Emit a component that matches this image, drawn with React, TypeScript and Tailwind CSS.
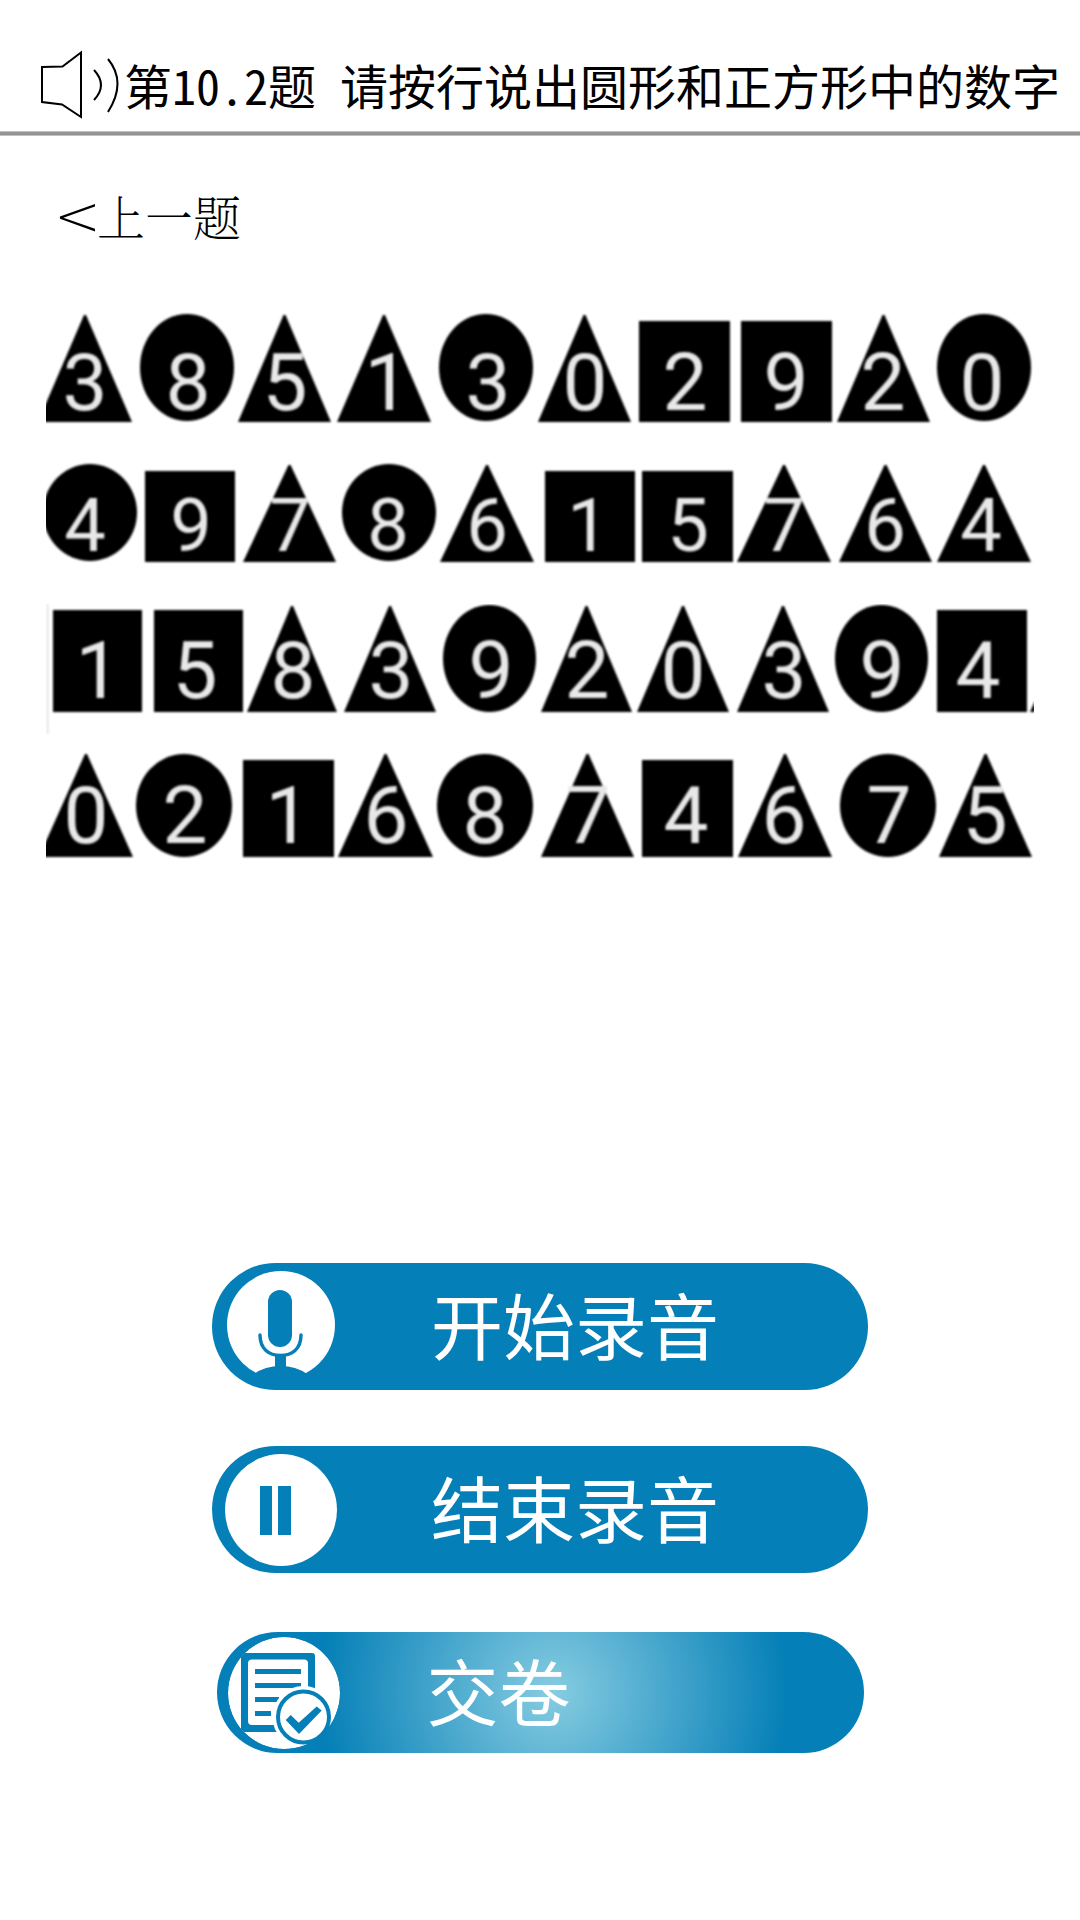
import type { ReactNode } from 'react';

type Kind = 'tri' | 'circle' | 'square';

// One figure: its kind, left and right edge, the digit and the digit's centre.
type Figure = [Kind, number, number, string, number];

interface RowData {
  tri: [number, number];
  circle: [number, number];
  square: [number, number];
  baseline: number;
  size: number;
  figures: Figure[];
}

const rows: RowData[] = [
  {
    tri: [7, 114],
    circle: [6, 113],
    square: [13, 114],
    baseline: 102,
    size: 80,
    figures: [
      ['tri', 38, 132, '3', 85],
      ['circle', 140, 234, '8', 188],
      ['tri', 238, 331, '5', 285],
      ['tri', 337, 431, '1', 387],
      ['circle', 439, 533, '3', 488],
      ['tri', 538, 631, '0', 585],
      ['square', 639, 730, '2', 685],
      ['square', 741, 832, '9', 786],
      ['tri', 837, 930, '2', 883],
      ['circle', 937, 1031, '0', 982],
    ],
  },
  {
    tri: [9, 106],
    circle: [8, 105],
    square: [15, 106],
    baseline: 95,
    size: 74,
    figures: [
      ['circle', 43, 137, '4', 85],
      ['square', 145, 235, '9', 191],
      ['tri', 243, 336, '7', 290],
      ['circle', 342, 436, '8', 388],
      ['tri', 440, 534, '6', 487],
      ['square', 545, 635, '1', 588],
      ['square', 642, 733, '5', 688],
      ['tri', 737, 831, '7', 784],
      ['tri', 839, 932, '6', 885],
      ['tri', 937, 1031, '4', 981],
    ],
  },
  {
    tri: [2, 108],
    circle: [1, 108],
    square: [6, 108],
    baseline: 94,
    size: 80,
    figures: [
      ['square', 53, 142, '1', 98],
      ['square', 154, 243, '5', 195],
      ['tri', 247, 337, '8', 293],
      ['tri', 344, 436, '3', 391],
      ['circle', 443, 536, '9', 491],
      ['tri', 541, 632, '2', 587],
      ['tri', 637, 729, '0', 683],
      ['tri', 737, 829, '3', 784],
      ['circle', 835, 928, '9', 882],
      ['square', 937, 1027, '4', 978],
    ],
  },
  {
    tri: [2, 105],
    circle: [2, 105],
    square: [8, 105],
    baseline: 91,
    size: 80,
    figures: [
      ['tri', 39, 133, '0', 86],
      ['circle', 136, 232, '2', 185],
      ['square', 243, 334, '1', 288],
      ['tri', 338, 433, '6', 386],
      ['circle', 437, 533, '8', 485],
      ['tri', 541, 634, '7', 588],
      ['square', 642, 733, '4', 686],
      ['tri', 738, 832, '6', 784],
      ['circle', 840, 936, '7', 889],
      ['tri', 939, 1032, '5', 985],
    ],
  },
];

function Shape({ kind, l, r, t, b }: { kind: Kind; l: number; r: number; t: number; b: number }) {
  const cx = (l + r) / 2;
  if (kind === 'circle') {
    return <ellipse cx={cx} cy={(t + b) / 2} rx={(r - l) / 2} ry={(b - t) / 2} />;
  }
  if (kind === 'square') {
    return <rect x={l} y={t} width={r - l} height={b - t} />;
  }
  return <path d={`M${cx - 1} ${t}h2L${r} ${b}H${l}Z`} />;
}

function FigureRow({ row, children }: { row: RowData; children?: ReactNode }) {
  return (
    <svg viewBox="46 0 988 148" className="block w-full">
      <g className="blur-[1px]">
        {children}
        {row.figures.map(([kind, l, r, digit, x]) => (
          <g key={l}>
            <Shape kind={kind} l={l} r={r} t={row[kind][0]} b={row[kind][1]} />
            <text
              x={x}
              y={row.baseline}
              fontSize={row.size}
              textAnchor="middle"
              className="fill-[#e8e8e8] font-['Roboto',sans-serif]"
            >
              {digit}
            </text>
          </g>
        ))}
      </g>
    </svg>
  );
}

function SpeakerIcon() {
  return (
    <svg viewBox="36 48 88 72" className="h-[72px] w-[88px] shrink-0 fill-none stroke-black" strokeWidth="2">
      <path d="M42 67L62.500 66.500L81 52.500V117L62 104.500L42 102Z" />
      <path d="M94 70Q108 85 94 100" />
      <path d="M108 59Q127 82 108 112" />
    </svg>
  );
}

function MicIcon() {
  return (
    <svg viewBox="226 1271 112 112" className="size-[112px] shrink-0 fill-[#047fb7]">
      <circle cx="282" cy="1325" r="54" fill="#fff" />
      <rect x="269" y="1290" width="24" height="57" rx="12" />
      <path d="M261 1335C261 1349 270 1355.500 281.500 1355.500S302 1349 302 1335" fill="none" stroke="#047fb7" strokeWidth="3.400" strokeLinecap="round" />
      <rect x="276" y="1355" width="11" height="13" />
      <path d="M255 1374Q266 1366 281.500 1366T308 1374V1381H255Z" />
    </svg>
  );
}

function PauseIcon() {
  return (
    <svg viewBox="226 1453 112 112" className="size-[112px] shrink-0 fill-[#047fb7]">
      <circle cx="282" cy="1509" r="56" fill="#fff" />
      <rect x="261" y="1485" width="12" height="49" />
      <rect x="279" y="1485" width="13" height="49" />
    </svg>
  );
}

function PaperIcon() {
  return (
    <svg viewBox="228 1637 112 112" className="size-[112px] shrink-0 fill-[#047fb7]">
      <clipPath id="paper-disc">
        <circle cx="284" cy="1693" r="56" />
      </clipPath>
      <g clipPath="url(#paper-disc)">
        <circle cx="284" cy="1693" r="56" fill="#fff" />
        <rect x="241" y="1653" width="74" height="79" rx="3" />
        <rect x="248" y="1659.500" width="60" height="65.500" rx="4" fill="#fff" />
        <path d="M255 1669h46v5h-46ZM255 1683h46v5h-46ZM255 1697h24v5h-24ZM255 1711h16v5h-16Z" />
        <circle cx="303.500" cy="1717" r="31" fill="#fff" />
      </g>
      <circle cx="303.500" cy="1717" r="25.500" fill="#fff" stroke="#047fb7" strokeWidth="4" />
      <path d="M285.700 1720L290.700 1715L298.700 1722.700L316.700 1706.500L321.700 1710.500L299 1734Z" />
    </svg>
  );
}

function PillButton({ icon, label, className }: { icon: ReactNode; label: string; className: string }) {
  return (
    <button
      type="button"
      className={`flex max-w-full items-center rounded-full text-7xl leading-none text-white ${className}`}
    >
      {icon}
      <span className="pb-2">{label}</span>
    </button>
  );
}

export default function App() {
  return (
    <div className="min-h-screen bg-white font-['Noto_Sans_CJK_SC',sans-serif] text-black">
      <header>
        <div className="flex items-center pt-12 pl-9 pb-[11px]">
          <button type="button" aria-label="播放题目" className="shrink-0">
            <SpeakerIcon />
          </button>
          <h1 className="whitespace-nowrap text-5xl leading-[72px] [font-feature-settings:'hwid']">
            第10.2题 请按行说出圆形和正方形中的数字
          </h1>
        </div>
        <div className="h-[5px] border-y border-[#c0c0c0] bg-[#949494]" />
      </header>

      <nav className="flex pt-[48px] pl-[54px]">
        <a
          href="#previous"
          className="flex items-center font-['Noto_Serif_CJK_SC','Noto_Sans_CJK_SC',serif] text-5xl font-extralight leading-[64px]"
        >
          <span className="-mr-1 font-['DejaVu_Sans',sans-serif] text-[56px]">&lt;</span>
          <span>上一题</span>
        </a>
      </nav>

      <main className="pt-[60px]">
        <section aria-label="图形数字" className="pr-[46px] pl-[46px]">
          <FigureRow row={rows[0]} />
          <FigureRow row={rows[1]} />
          <FigureRow row={rows[2]}>
            <rect x="46" y="0" width="3" height="130" fill="#ececec" />
            <path d="M1035 97V108H1030Z" />
          </FigureRow>
          <FigureRow row={rows[3]} />
        </section>

        <div className="mt-[363px] flex flex-col items-center">
          <PillButton icon={<MicIcon />} label="开始录音" className="h-[127px] w-[656px] gap-[94px] bg-[#047fb7] pl-[13px]" />
          <PillButton icon={<PauseIcon />} label="结束录音" className="mt-14 h-[127px] w-[656px] gap-[94px] bg-[#047fb7] pl-[13px]" />
          <PillButton
            icon={<PaperIcon />}
            label="交卷"
            className="mt-[59px] h-[121px] w-[647px] gap-[87px] bg-[radial-gradient(circle_235px_at_52%_50%,#86cce1,#047fb7)] pl-[11px]"
          />
        </div>
      </main>
    </div>
  );
}
